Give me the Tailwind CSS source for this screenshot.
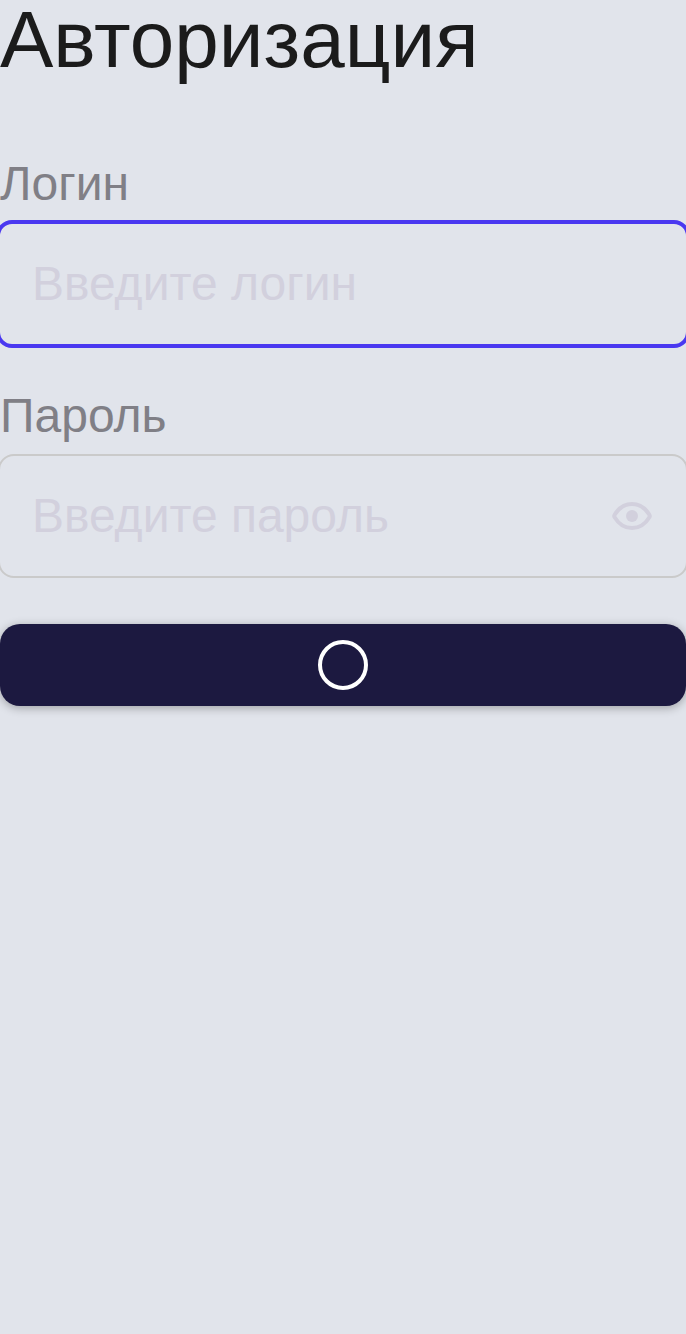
<!DOCTYPE html>
<html lang="ru">
<head>
<meta charset="utf-8">
<meta name="viewport" content="width=device-width, initial-scale=1">
<title>Авторизация</title>
<script src="https://cdn.jsdelivr.net/npm/@tailwindcss/browser@4"></script>
</head>
<body class="min-h-screen overflow-x-hidden bg-[#e1e4eb] font-['Liberation_Sans',Arial,sans-serif]">
<main>
  <h1 class="text-[80px] leading-20 text-[#1b1b1b]">Авторизация</h1>
  <form class="mt-20 flex flex-col">
    <label for="login" class="text-5xl leading-12 text-[#807f86]">Логин</label>
    <div class="-mx-1 mt-3 flex h-32 rounded-2xl border-4 border-[#4a38f0]">
      <input id="login" type="text" placeholder="Введите логин" class="min-w-0 flex-1 bg-transparent px-8 pb-0.5 text-5xl text-[#1b1b1b] outline-none placeholder:text-[#d2d0dd]">
    </div>
    <label for="password" class="mt-11 text-5xl leading-12 text-[#807f86]">Пароль</label>
    <div class="-mx-0.5 mt-3.5 flex h-31 items-center rounded-2xl border-2 border-[#cacaca] pr-[34px]">
      <input id="password" type="password" placeholder="Введите пароль" class="h-full min-w-0 flex-1 bg-transparent px-8 pb-0.5 text-5xl text-[#1b1b1b] outline-none placeholder:text-[#d2d0dd]">
      <button type="button" aria-label="Показать пароль" class="text-[#d2d0dd]">
        <svg class="h-10 w-10" viewBox="0 0 40 40" fill="none" stroke="currentColor" stroke-width="4"><path d="M2.6 21.2Q1.8 20 2.6 18.8C7 11.5 13 8 20 8s13 3.5 17.4 10.8Q38.200 20 37.400 21.200C33 28.500 27 32 20 32S7 28.500 2.600 21.200z" stroke-linejoin="round"/><circle cx="20" cy="20" r="6" fill="currentColor" stroke="none"/></svg>
      </button>
    </div>
    <button type="submit" aria-label="Войти" class="mt-[46px] flex h-[82px] items-center justify-center rounded-[20px] bg-[#1c1940] shadow-[0_2px_10px_rgba(0,0,0,0.3)]">
      <span class="size-[50px] rounded-full border-4 border-white"></span>
    </button>
  </form>
</main>
</body>
</html>
